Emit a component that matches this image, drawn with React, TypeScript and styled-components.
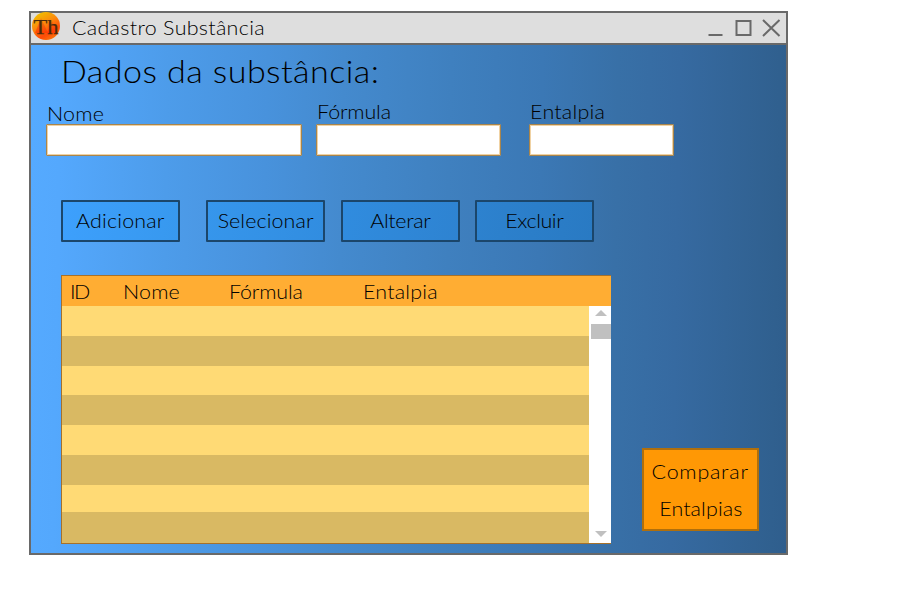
import React from "react";
import styled, { createGlobalStyle } from "styled-components";

const GlobalStyle = createGlobalStyle`
  * { box-sizing: border-box; }
  body { margin: 0; background: #fff; }
`;

const Page = styled.main`
  width: 920px;
  height: 603px;
  padding: 11px 0 0 29px;
  overflow: hidden;
  font-family: Lato, "Century Gothic", sans-serif;
  font-weight: 300;
  font-size: 19.5px;
  color: #000;
`;

const Window = styled.section`
  width: 759px;
  height: 544px;
  border: 2px solid #696969;
  display: flex;
  flex-direction: column;
`;

const TitleBar = styled.header`
  flex: none;
  height: 32px;
  border-bottom: 2px solid #696969;
  background: #dedede;
  display: flex;
  align-items: center;
`;

const Logo = styled.svg`
  flex: none;
  width: 29px;
  height: 29px;
  margin: -4px 11px 0 1px;
  overflow: visible;
`;

const Lettering = styled.span<{ $track?: number; $from?: "left" | "center" }>`
  display: inline-block;
  white-space: nowrap;
  transform: scaleX(1.1);
  transform-origin: ${(p) => p.$from ?? "left"} center;
  letter-spacing: ${(p) => p.$track ?? 0}px;
`;

const WindowTitle = styled.h1`
  margin: 0;
  flex: 1;
  font: inherit;
  line-height: 30px;
`;

const Controls = styled.svg`
  flex: none;
  width: 74px;
  height: 20px;
  margin: 0 5px 0 0;
`;

const Body = styled.div`
  flex: 1;
  display: flex;
  flex-direction: column;
  background: linear-gradient(
    91deg,
    #55aaff 0%,
    #54a8fd 4%,
    #4d9cea 18%,
    #4892dc 31%,
    #448ace 41%,
    #3f80bf 55%,
    #3b78b5 67%,
    #3870a7 77%,
    #366aa1 85%,
    #30608f 98%,
    #2f5e8d 100%
  );
`;

const Heading = styled.h2`
  margin: 6px 0 0 30px;
  font: inherit;
  font-size: 31px;
  line-height: 41px;
  height: 40px;
`;

const Form = styled.form`
  display: flex;
  align-items: flex-end;
  height: 65px;
  padding-left: 15px;
`;

const Field = styled.label<{ $width: number; $gap: number; $leading: number }>`
  display: flex;
  flex-direction: column;
  width: ${(p) => p.$width}px;
  margin-right: ${(p) => p.$gap}px;
  line-height: ${(p) => p.$leading}px;
  text-indent: 1px;
`;

const Input = styled.input`
  width: 100%;
  height: 32px;
  padding: 0 6px;
  border: 1px solid #a9854c;
  border-radius: 1px;
  box-shadow: inset 0 0 0 1px #f0d2a3;
  background: #fff;
  font: inherit;
`;

const Actions = styled.div`
  display: flex;
  margin: 44px 0 0 30px;
`;

const ActionButton = styled.button<{ $gap: number; $fill: string }>`
  width: 119px;
  height: 42px;
  padding: 0 0 2px;
  margin-right: ${(p) => p.$gap}px;
  border: 2px solid #1b466b;
  border-radius: 1px;
  background: linear-gradient(100deg, ${(p) => p.$fill});
  font: inherit;
  color: inherit;
`;

const Lower = styled.div`
  display: flex;
  align-items: flex-end;
  margin: 33px 0 0 30px;
`;

const Table = styled.div`
  width: 550px;
  height: 269px;
  border: 1px solid #a6712a;
  border-right: 0;
`;

const TableHead = styled.div`
  display: grid;
  grid-template-columns: 53px 106px 134px 1fr;
  height: 30px;
  padding-left: 8px;
  background: #ffad33;
  line-height: 32px;
`;

const TableBody = styled.div`
  display: flex;
  height: 237px;
`;

const Rows = styled.div`
  flex: 1;
`;

const Row = styled.div<{ $height: number; $dark: boolean }>`
  height: ${(p) => p.$height}px;
  background: ${(p) => (p.$dark ? "#d9b963" : "#ffda75")};
`;

const Scrollbar = styled.div`
  width: 22px;
  display: flex;
  flex-direction: column;
  background: #fff;
`;

const Arrow = styled.svg<{ $below: number }>`
  width: 12px;
  height: 6px;
  margin: 4px 0 ${(p) => p.$below}px 6px;
`;

const Thumb = styled.div`
  height: 15px;
  margin: 0 0 auto 2px;
  background: #c0c0c0;
`;

const CompareButton = styled.button`
  width: 117px;
  height: 83px;
  padding: 3px 0 0;
  margin: 0 0 13px 31px;
  border: 2px solid #b06f0c;
  background: #ff9805;
  font: inherit;
  line-height: 37px;
  color: inherit;
  display: flex;
  flex-direction: column;
  justify-content: flex-start;
  align-items: center;
`;

const fields = [
  { label: "Nome", width: 256, gap: 14, track: 0.15, leading: 20 },
  { label: "Fórmula", width: 185, gap: 28, track: -0.15, leading: 24 },
  { label: "Entalpia", width: 145, gap: 0, track: 0.2, leading: 24 },
];

const actions = [
  { label: "Adicionar", gap: 26, track: 0.16, fill: "#3da0fd, #3798ee" },
  { label: "Selecionar", gap: 16, track: 0.08, fill: "#3696ec, #318de0" },
  { label: "Alterar", gap: 15, track: -0.3, fill: "#308cdf, #2e83d1" },
  { label: "Excluir", gap: 0, track: -0.4, fill: "#2d82cf, #297ac3" },
];

const columns = [
  { label: "ID", track: -1.5 },
  { label: "Nome", track: 0.15 },
  { label: "Fórmula", track: -0.15 },
  { label: "Entalpia", track: 0.2 },
];

const rowHeights = [30, 30, 29, 30, 30, 30, 27, 31];

export default function App() {
  return (
    <Page>
      <GlobalStyle />
      <Window>
        <TitleBar>
          <Logo viewBox="0 0 29 29">
            <defs>
              <linearGradient id="sphere" x1="0.2" y1="0" x2="0.75" y2="1">
                <stop offset="0" stopColor="#f0c400" />
                <stop offset="0.4" stopColor="#fb8c0c" />
                <stop offset="0.75" stopColor="#ff4a08" />
                <stop offset="1" stopColor="#fa7a0a" />
              </linearGradient>
              <linearGradient id="flame" x1="0" y1="0" x2="0" y2="1">
                <stop offset="0" stopColor="#e86a10" />
                <stop offset="1" stopColor="#ff2a00" />
              </linearGradient>
            </defs>
            <circle cx="14" cy="14" r="14" fill="url(#sphere)" />
            <path d="M9 6 L16 21 H3 Z M20 9 L26 21 H15 Z" fill="url(#flame)" opacity="0.6" />
            <text
              x="1.5"
              y="21.5"
              fontFamily="Liberation Serif, serif"
              fontSize="21.5"
              fontWeight="400"
              fill="#4b2a0c"
              stroke="#4b2a0c"
              strokeWidth="0.25"
              textLength="25"
              lengthAdjust="spacingAndGlyphs"
            >
              Th
            </text>
          </Logo>
          <WindowTitle>
            <Lettering $track={0.28}>Cadastro Substância</Lettering>
          </WindowTitle>
          <Controls viewBox="0 0 74 20" fill="none" stroke="#696969" strokeWidth="2">
            <path d="M1.5 17 H15.5" />
            <rect x="29.5" y="3" width="14" height="14" />
            <path d="M56 2 L72.5 18 M72.5 2 L56 18" />
          </Controls>
        </TitleBar>
        <Body>
          <Heading>
            <Lettering $track={0.38}>Dados da substância:</Lettering>
          </Heading>
          <Form>
            {fields.map((f) => (
              <Field key={f.label} $width={f.width} $gap={f.gap} $leading={f.leading}>
                <Lettering $track={f.track}>{f.label}</Lettering>
                <Input />
              </Field>
            ))}
          </Form>
          <Actions>
            {actions.map((a) => (
              <ActionButton key={a.label} type="button" $gap={a.gap} $fill={a.fill}>
                <Lettering $from="center" $track={a.track}>
                  {a.label}
                </Lettering>
              </ActionButton>
            ))}
          </Actions>
          <Lower>
            <Table>
              <TableHead>
                {columns.map((c) => (
                  <Lettering key={c.label} $track={c.track}>
                    {c.label}
                  </Lettering>
                ))}
              </TableHead>
              <TableBody>
                <Rows>
                  {rowHeights.map((h, i) => (
                    <Row key={i} $height={h} $dark={i % 2 === 1} />
                  ))}
                </Rows>
                <Scrollbar>
                  <Arrow $below={8} viewBox="0 0 12 6" fill="#c0c0c0">
                    <path d="M0 6 L6 0 L12 6 Z" />
                  </Arrow>
                  <Thumb />
                  <Arrow $below={6} viewBox="0 0 12 6" fill="#c0c0c0">
                    <path d="M0 0 L6 6 L12 0 Z" />
                  </Arrow>
                </Scrollbar>
              </TableBody>
            </Table>
            <CompareButton type="button">
              <Lettering $from="center" $track={0.69}>
                Comparar
              </Lettering>
              <Lettering $from="center" $track={0.1}>
                Entalpias
              </Lettering>
            </CompareButton>
          </Lower>
        </Body>
      </Window>
    </Page>
  );
}
